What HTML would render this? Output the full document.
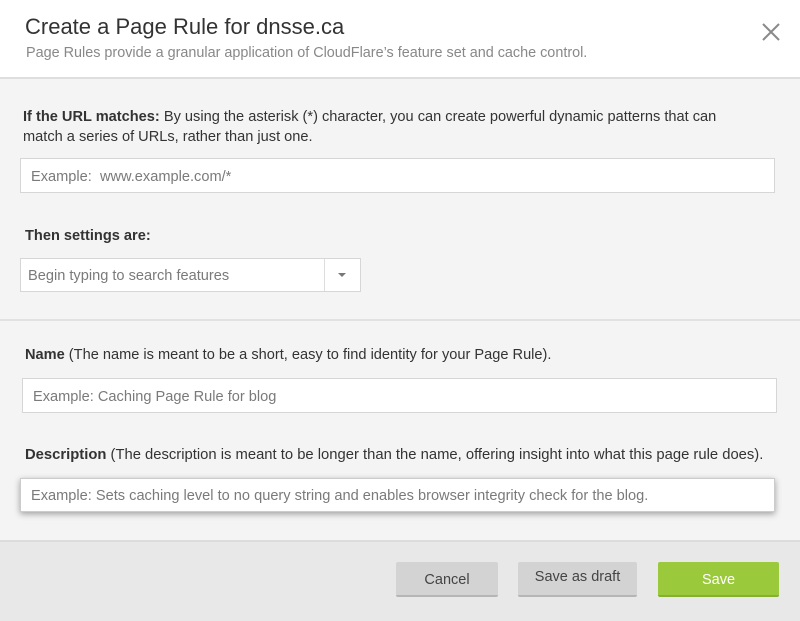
<!DOCTYPE html>
<html><head><meta charset="utf-8"><style>
*{box-sizing:border-box;margin:0;padding:0}
body{width:800px;height:621px;background:#f4f4f4;font-family:"Liberation Sans",sans-serif;color:#333;position:relative;overflow:hidden}
.abs{position:absolute}
.hdr{left:0;top:0;width:800px;height:79px;background:#fff;border-bottom:2px solid #dedede}
.t{font-size:14.6px;color:#333;white-space:nowrap}
.inp{background:#fff;border:1px solid #d6d6d6;font-size:14.6px;color:#7a7a7a;padding-left:10px;padding-top:2px;display:flex;align-items:center;white-space:nowrap}
.btn{height:35px;border-radius:2px;font-size:14.5px;display:flex;align-items:center;justify-content:center;padding-top:2px}
</style></head><body>
<div class="abs hdr"></div>
<div class="abs" style="left:25px;top:14px;font-size:22px;color:#333;white-space:nowrap">Create a Page Rule for dnsse.ca</div>
<div class="abs" style="left:26px;top:45px;font-size:14.4px;color:#888;white-space:nowrap">Page Rules provide a granular application of CloudFlare’s feature set and cache control.</div>
<svg class="abs" style="left:760px;top:21px" width="22" height="22" viewBox="0 0 22 22"><path d="M3 3L19 19M19 3L3 19" stroke="#8a8a8a" stroke-width="2"/></svg>

<div class="abs t" style="left:23px;top:107px;line-height:20px">
<b>If the URL matches:</b> By using the asterisk (*) character, you can create powerful dynamic patterns that can<br>match a series of URLs, rather than just one.</div>
<div class="abs inp" style="left:20px;top:158px;width:755px;height:35px">Example:&nbsp; www.example.com/*</div>

<div class="abs t" style="left:25px;top:228px"><b>Then settings are:</b></div>
<div class="abs inp" style="left:20px;top:258px;width:341px;height:34px;padding-left:7px">Begin typing to search features</div>
<div class="abs" style="left:324px;top:259px;width:1px;height:32px;background:#ddd"></div>
<div class="abs" style="left:338px;top:273px;width:0;height:0;border-left:4px solid transparent;border-right:4px solid transparent;border-top:4px solid #777"></div>

<div class="abs" style="left:0;top:319px;width:800px;height:2px;background:#e2e2e2"></div>

<div class="abs t" style="left:25px;top:347px"><b>Name</b> (The name is meant to be a short, easy to find identity for your Page Rule).</div>
<div class="abs inp" style="left:22px;top:378px;width:755px;height:35px">Example: Caching Page Rule for blog</div>

<div class="abs t" style="left:25px;top:447px;font-size:14.8px"><b>Description</b> (The description is meant to be longer than the name, offering insight into what this page rule does).</div>
<div class="abs inp" style="left:20px;top:478px;width:755px;height:34px;border-color:#ccc;box-shadow:0 2px 6px rgba(0,0,0,0.35)">Example: Sets caching level to no query string and enables browser integrity check for the blog.</div>

<div class="abs" style="left:0;top:540px;width:800px;height:81px;background:#e8e8e8;border-top:2px solid #dcdcdc"></div>
<div class="abs btn" style="left:396px;top:562px;width:102px;background:#d3d3d3;color:#444;border-bottom:2px solid #b5b5b5">Cancel</div>
<div class="abs btn" style="left:518px;top:562px;width:119px;background:#d3d3d3;color:#444;border-bottom:2px solid #b5b5b5;padding-top:0;padding-bottom:3px">Save as draft</div>
<div class="abs btn" style="left:658px;top:562px;width:121px;background:#9bc93c;color:#fff;border-bottom:2px solid #86b02e">Save</div>
</body></html>
